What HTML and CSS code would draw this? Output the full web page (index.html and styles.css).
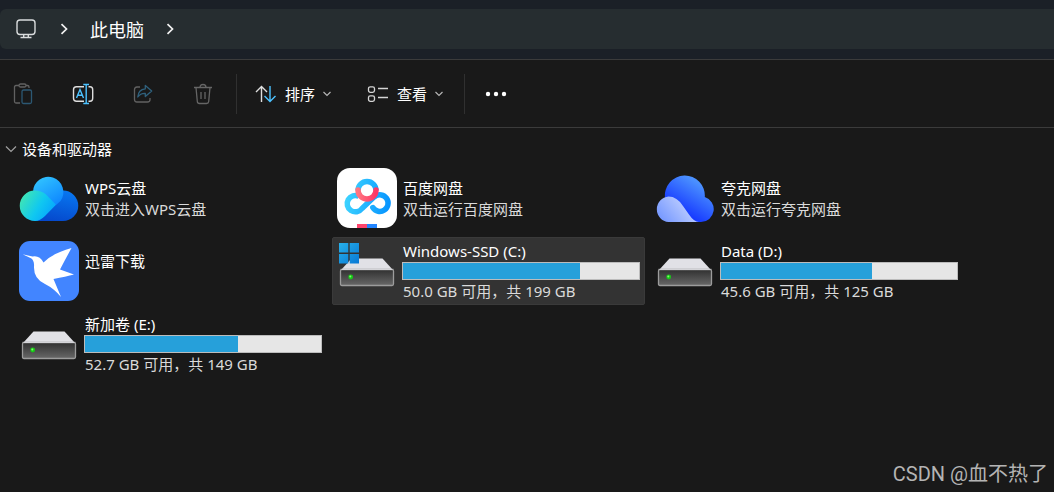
FILE: index.html
```
<!DOCTYPE html>
<html lang="zh-CN">
<head>
<meta charset="utf-8">
<meta name="viewport" content="width=device-width, initial-scale=1">
<title>此电脑</title>
<link rel="stylesheet" href="styles.css">
</head>
<body>
<svg class="defs" width="0" height="0" aria-hidden="true">
  <defs>
    <linearGradient id="driveFront" x1="0" y1="0" x2="0" y2="1"><stop offset="0" stop-color="#303030"/><stop offset="1" stop-color="#686868"/></linearGradient>
    <linearGradient id="winBlue" x1="0" y1="0" x2="1" y2="1"><stop offset="0" stop-color="#27b0ea"/><stop offset="1" stop-color="#0878d4"/></linearGradient>
    <symbol id="drive" viewBox="0 0 60 60">
      <path d="M14.500 27.500H45.500L56 39H4Z" fill="#e1e1e6"/>
      <path d="M4 38.500H56L56.500 40V53Q56.500 54.500 55 54.500H5Q3.500 54.500 3.500 53V40Z" fill="url(#driveFront)" stroke="#9c9c9c" stroke-width="1.300"/>
      <path d="M4.500 38.500H55.500" stroke="#d4d4d8" stroke-width="1.200"/>
      <circle cx="13.700" cy="46" r="2.400" fill="#18c818"/><circle cx="13.300" cy="45.500" r="1" fill="#7dff6a"/>
    </symbol>
  </defs>
</svg>

<header class="address-row">
  <nav class="address" aria-label="地址栏">
    <svg class="pc" width="20" height="20" viewBox="0 0 20 20" fill="none" stroke="#d9dcdd" stroke-width="1.400"><rect x="1" y="1" width="18" height="14.500" rx="3"/><path d="M7.700 15.500V18M12.300 15.500V18M4.500 18.500H15.500"/></svg>
    <svg class="crumb" width="8" height="12" viewBox="0 0 8 12" fill="none" stroke="#f2f2f2" stroke-width="1.700"><path d="M1.500 1.200L6.500 6L1.500 10.800"/></svg>
    <a class="place" href="#devices">此电脑</a>
    <svg class="crumb" width="8" height="12" viewBox="0 0 8 12" fill="none" stroke="#f2f2f2" stroke-width="1.700"><path d="M1.500 1.200L6.500 6L1.500 10.800"/></svg>
  </nav>
</header>

<div class="toolbar" role="toolbar" aria-label="命令栏">
  <div class="icons">
    <button class="tool" aria-label="粘贴" disabled><svg width="20" height="22" viewBox="0 0 20 22" fill="none" stroke-width="1.300"><path d="M6 2.500H3Q1.500 2.500 1.500 4V18.500Q1.500 20 3 20H7M13 2.500H14.500Q16 2.500 16 4V5" stroke="#616161"/><rect x="6" y="1" width="7" height="3" rx="1.500" stroke="#616161"/><rect x="9" y="7" width="9.500" height="13.500" rx="1.500" stroke="#2c5873"/></svg></button>
    <button class="tool" aria-label="重命名"><svg width="22" height="22" viewBox="0 0 22 22" fill="none" stroke-width="1.400"><path d="M12 3.700H4.500Q1.500 3.700 1.500 6.700V15.300Q1.500 18.300 4.500 18.300H12M16.500 3.700H18Q20.700 3.700 20.700 6.700V15.300Q20.700 18.300 18 18.300H16.500" stroke="#dedede"/><path d="M4.500 15L8 6.500L11.500 15M5.700 12.200H10.300M11.300 1.500H17M11.300 20.500H17M14.200 1.500V20.500" stroke="#4cc2ff"/></svg></button>
    <button class="tool" aria-label="共享" disabled><svg width="20" height="20" viewBox="0 0 20 20" fill="none" stroke-width="1.300" stroke-linejoin="round"><path d="M7 3H4Q1.500 3 1.500 5.500V15.500Q1.500 18 4 18H14.500Q17 18 17 15.500V14" stroke="#616161"/><path d="M12.300 1.500L18.700 7L12.300 12.500V9.300Q7.500 9 4.800 13Q5.200 5.500 12.300 4.800Z" stroke="#2f617d"/></svg></button>
    <button class="tool" aria-label="删除" disabled><svg width="20" height="22" viewBox="0 0 20 22" fill="none" stroke="#666" stroke-width="1.300"><path d="M1 4.500H19M7 4.500Q7 1.500 10 1.500T13 4.500M3 4.500L4.300 18.500Q4.500 20.500 6.500 20.500H13.500Q15.500 20.500 15.700 18.500L17 4.500M8 9V16M12 9V16"/></svg></button>
  </div>
  <div class="menus">
    <button class="menu"><svg width="22" height="18" viewBox="0 0 22 18" fill="none" stroke-width="1.400"><path d="M6.500 17V1.500M1 7L6.500 1.500L12 7" stroke="#dedede"/><path d="M15 1V16.500M9.500 11L15 16.500L20.500 11" stroke="#4cc2ff"/></svg><span>排序</span><svg width="8" height="6" viewBox="0 0 8 6" fill="none" stroke="#b5b5b5" stroke-width="1.200"><path d="M.5 1L4 4.500L7.500 1"/></svg></button>
    <button class="menu"><svg width="22" height="18" viewBox="0 0 22 18" fill="none" stroke="#d4d4d4" stroke-width="1.300"><rect x="1.500" y="1.800" width="6" height="5.500" rx="1.800"/><rect x="1.500" y="10.800" width="6" height="5.500" rx="1.800"/><path d="M11 3.500H21M11 12.500H21"/></svg><span>查看</span><svg width="8" height="6" viewBox="0 0 8 6" fill="none" stroke="#b5b5b5" stroke-width="1.200"><path d="M.5 1L4 4.500L7.500 1"/></svg></button>
  </div>
  <button class="more" aria-label="更多"><svg width="22" height="6" viewBox="0 0 22 6" fill="#fff"><circle cx="3" cy="3" r="2.200"/><circle cx="11" cy="3" r="2.200"/><circle cx="19" cy="3" r="2.200"/></svg></button>
</div>

<main class="content" id="devices">
  <h1 class="group"><button class="group-toggle" aria-expanded="true"><svg width="12" height="8" viewBox="0 0 12 8" fill="none" stroke="#a0a0a0" stroke-width="1.200"><path d="M1 1.500L6 6.500L11 1.500"/></svg><span>设备和驱动器</span></button></h1>
  <ul class="tiles">
    <li class="tile">
      <svg class="icon" viewBox="0 0 60 60">
        <defs>
          <linearGradient id="w1" x1=".2" y1="0" x2=".9" y2="1"><stop offset="0" stop-color="#31c4ff"/><stop offset="1" stop-color="#0c83ff"/></linearGradient>
          <linearGradient id="w2" x1="0" y1=".2" x2="1" y2=".7"><stop offset="0" stop-color="#43e8b0"/><stop offset=".55" stop-color="#10c8f0"/><stop offset="1" stop-color="#05a2ff"/></linearGradient>
          <linearGradient id="w3" x1=".7" y1="0" x2=".4" y2="1"><stop offset="0" stop-color="#0877f0"/><stop offset="1" stop-color="#0549cd"/></linearGradient>
        </defs>
        <path d="M44 22.500A15 15 0 0 1 44 53H15L27 35Z" fill="url(#w3)"/>
        <path d="M14 24A15.200 15.200 0 1 1 41.500 33L37 37Z" fill="url(#w1)"/>
        <path d="M16 22.500Q22 22.500 26.500 26L37 36.700L26 48Q21 53 16 53A15.200 15.200 0 0 1 16 22.500Z" fill="url(#w2)"/>
      </svg>
      <div class="info"><span class="name"><span class="latin">WPS</span>云盘</span><span class="detail">双击进入<span class="latin">WPS</span>云盘</span></div>
    </li>
    <li class="tile">
      <svg class="icon" viewBox="0 0 60 60">
        <defs>
          <linearGradient id="b1" gradientUnits="userSpaceOnUse" x1="8" y1="30" x2="52" y2="38"><stop offset="0" stop-color="#3ed4ff"/><stop offset="1" stop-color="#0795ff"/></linearGradient>
          <linearGradient id="b2" x1="0" y1="0" x2="1" y2="0"><stop offset="0" stop-color="#ff7580"/><stop offset="1" stop-color="#ff3766"/></linearGradient>
        </defs>
        <rect width="60" height="60" rx="13" fill="#fff"/>
        <g fill="none" stroke="url(#b1)" stroke-width="5.500">
          <path d="M21 22.500A9 9 0 0 1 39 22.500"/>
          <path d="M38 28L25 40.500A8.200 8.200 0 1 1 22 28.300"/>
          <path d="M38 28.300A8.300 8.300 0 1 1 35.800 39.600" stroke-linecap="round"/>
        </g>
        <path d="M21 22A9 9 0 0 0 39 22" fill="none" stroke="url(#b2)" stroke-width="5.500" stroke-linecap="round"/>
        <path d="M20 56H30V60H20Z" fill="#ff456d"/><path d="M30 56H40V60H30Z" fill="#2285ff"/>
      </svg>
      <div class="info"><span class="name">百度网盘</span><span class="detail">双击运行百度网盘</span></div>
    </li>
    <li class="tile">
      <svg class="icon" viewBox="0 0 60 60">
        <defs>
          <linearGradient id="q1" x1=".75" y1=".2" x2=".35" y2=".8"><stop offset="0" stop-color="#4b91ff"/><stop offset="1" stop-color="#1537ff"/></linearGradient>
          <linearGradient id="q2" x1="0" y1=".8" x2="1" y2=".3"><stop offset="0" stop-color="#7396ff"/><stop offset="1" stop-color="#d0dcff"/></linearGradient>
        </defs>
        <path d="M10 30A20 20 0 1 1 49.800 29A12.800 12.800 0 0 1 46 54H14L10 46Z" fill="url(#q1)"/>
        <path d="M13.500 28.500Q22 28.500 28 38L34 46.500Q39 54 44 54H13.500A12.800 12.800 0 0 1 13.500 28.500Z" fill="url(#q2)"/>
      </svg>
      <div class="info"><span class="name">夸克网盘</span><span class="detail">双击运行夸克网盘</span></div>
    </li>
    <li class="tile">
      <svg class="icon" viewBox="0 0 60 60"><rect width="60" height="60" rx="11" fill="#4285ff"/><path d="M3.500 13.200L13.500 15.500Q20.500 14 24.500 21.500Q33 12.500 52.500 7L46 19L41 28.500L55 33.500Q47 35.500 34.500 38L42 56Q35 47.500 26 43Q14.500 38 15 25.500Q15.500 19 11.500 17Z" fill="#fff"/></svg>
      <div class="info"><span class="name">迅雷下载</span><span class="detail"></span></div>
    </li>
    <li class="tile selected">
      <svg class="icon" viewBox="0 0 60 60"><use href="#drive" y="-10"/><path d="M2 2H11.300V11.500H2ZM12.700 2H22V11.500H12.700ZM2 13H11.300V22.500H2ZM12.700 13H22V22.500H12.700Z" fill="url(#winBlue)"/></svg>
      <div class="info"><span class="name latin" id="c">Windows-SSD (C:)</span><meter class="usage" aria-labelledby="c" min="0" max="100" value="75">75%</meter><span class="detail"><span class="latin">50.0 GB </span>可用，共<span class="latin"> 199 GB</span></span></div>
    </li>
    <li class="tile">
      <svg class="icon" viewBox="0 0 60 60"><use href="#drive" y="-10"/></svg>
      <div class="info"><span class="name latin" id="d">Data (D:)</span><meter class="usage" aria-labelledby="d" min="0" max="100" value="64">64%</meter><span class="detail"><span class="latin">45.6 GB </span>可用，共<span class="latin"> 125 GB</span></span></div>
    </li>
    <li class="tile">
      <svg class="icon" viewBox="0 0 60 60"><use href="#drive" y="-10"/></svg>
      <div class="info"><span class="name" id="e">新加卷<span class="latin"> (E:)</span></span><meter class="usage" aria-labelledby="e" min="0" max="100" value="65">65%</meter><span class="detail"><span class="latin">52.7 GB </span>可用，共<span class="latin"> 149 GB</span></span></div>
    </li>
  </ul>
</main>
<footer class="credit">CSDN @血不热了</footer>
</body>
</html>
```
FILE: styles.css
```
* { box-sizing: border-box; }

body {
  margin: 0;
  min-height: 100vh;
  display: flex;
  flex-direction: column;
  background: #191919;
  color: #fff;
  font: 15px/20px "Noto Sans CJK SC", sans-serif;
}

button {
  padding: 0;
  border: 0;
  background: none;
  color: inherit;
  font: inherit;
}

svg { display: block; flex: none; }
.defs { position: absolute; }

.latin {
  font-family: "Noto Sans", sans-serif;
  white-space: pre;
}

.address-row {
  padding: 9px 0 10px;
  background: #1b2027;
  border-bottom: 1px solid #3b3b3b;
}

.address {
  display: flex;
  align-items: center;
  height: 40px;
  padding-left: 16px;
  background: #262d30;
  border-radius: 6px 0 0 6px;
}

.crumb { margin: 0 22px 0 24px; }

.place {
  color: #fff;
  font-size: 18px;
  line-height: 24px;
  text-decoration: none;
}

.place + .crumb { margin-left: 22px; }

.toolbar {
  display: flex;
  align-items: center;
  height: 68px;
  border-bottom: 1px solid #3b3b3b;
}

.icons,
.menus {
  display: flex;
  align-items: center;
  height: 40px;
  border-right: 1px solid #303030;
}

.icons {
  gap: 20px;
  padding: 0 13px 0 3px;
}

.tool {
  display: grid;
  place-items: center;
  width: 40px;
  height: 40px;
}

.menus {
  gap: 36px;
  padding: 0 21px 0 18px;
}

.menu {
  display: flex;
  align-items: center;
  gap: 8px;
}

.more { padding: 8px 20px; }

.content {
  flex: 1;
  padding: 11px 0 0 5px;
}

.group {
  margin: 0;
  font: inherit;
}

.group-toggle {
  display: flex;
  align-items: center;
  gap: 5px;
}

.tiles {
  display: grid;
  grid-template-columns: repeat(auto-fill, 313px);
  gap: 5px;
  margin: 5px 0 0;
  padding: 0 0 0 9px;
  list-style: none;
}

.tile {
  display: flex;
  align-items: center;
  gap: 5px;
  height: 68px;
  padding: 0 4px;
  border: 1px solid transparent;
  border-radius: 2px;
}

.tile.selected {
  background: #333;
  border-color: #3a3a3a;
}

.icon {
  width: 60px;
  height: 60px;
}

.info {
  display: flex;
  flex: 1;
  flex-direction: column;
  gap: 1px;
}

.name,
.detail {
  min-height: 20px;
  padding-left: 1px;
  line-height: 20px;
}

.detail { color: #dadada; }

.usage {
  appearance: none;
  display: block;
  width: 100%;
  height: 18px;
  border: 1px solid #bcbcbc;
  background: #e6e6e6;
}

.usage::-webkit-meter-inner-element {
  display: block;
  position: static;
  height: 100%;
}

.usage::-webkit-meter-bar {
  display: block;
  position: static;
  height: 100%;
  margin: 0;
  border: 0;
  border-radius: 0;
  background: #e6e6e6;
}

.usage::-webkit-meter-optimum-value {
  height: 100%;
  background: #26a0da;
}

.credit {
  padding: 0 6px 4px;
  color: #b4b4b4;
  font: 20px/28px Roboto, "Noto Sans CJK SC", sans-serif;
  text-align: right;
}
```
